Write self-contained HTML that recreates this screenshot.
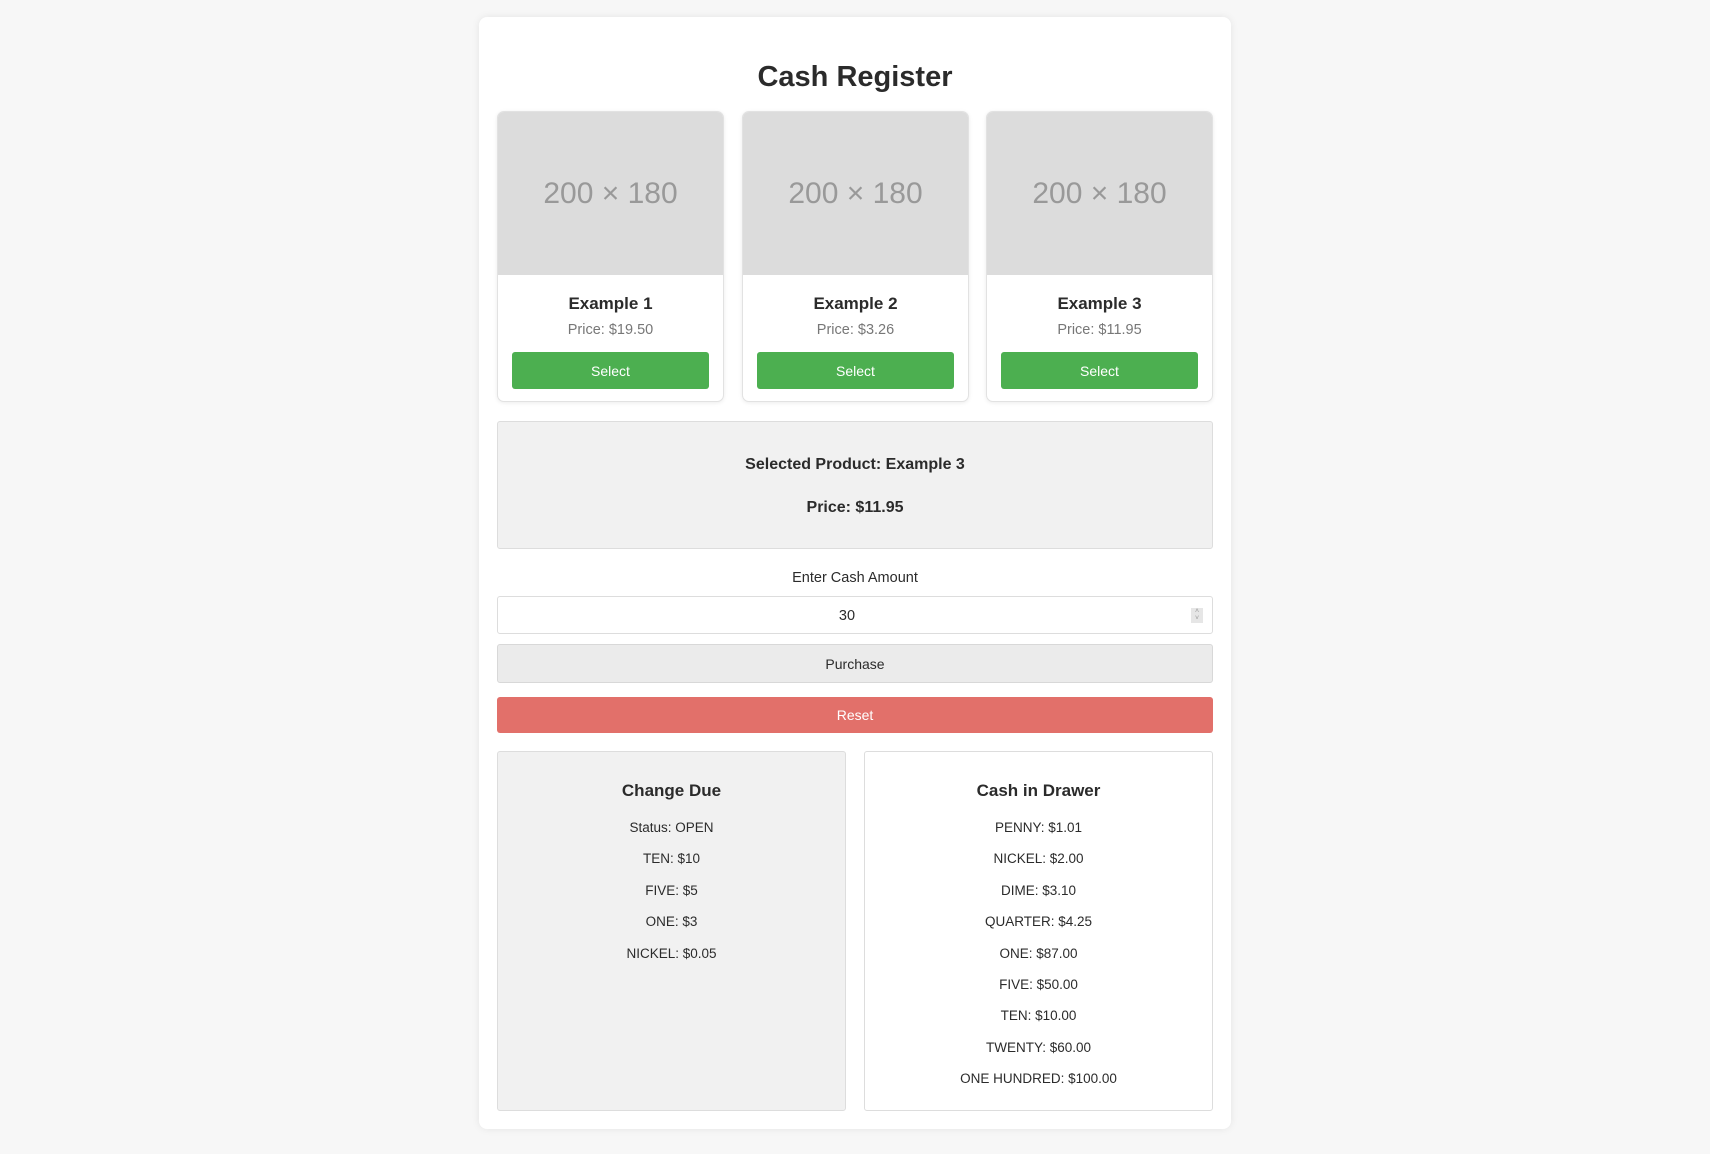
<!DOCTYPE html>
<html><head><meta charset="utf-8">
<style>
*{box-sizing:border-box;margin:0;padding:0}
html,body{width:1710px;height:1154px;background:#f7f7f7;font-family:"Liberation Sans",sans-serif;color:#2b2b2b;overflow:hidden;position:relative}
.abs{position:absolute}
.c{text-align:center}
.wrap{left:479px;top:17px;width:752px;height:1112px;background:#fff;border-radius:8px;box-shadow:0 0 8px rgba(0,0,0,0.08)}
.card{top:111px;width:227px;height:291px;background:#fff;border:1px solid #e2e2e2;border-radius:7px;box-shadow:0 1px 4px rgba(0,0,0,0.08);overflow:hidden}
.img{left:0;top:0;width:100%;height:163px;background:#dcdcdc;color:#999;font-size:30px;line-height:163px;text-align:center}
.ct{left:0;width:100%;text-align:center;font-weight:bold;font-size:17px;top:182px}
.cp{left:0;width:100%;text-align:center;color:#777;font-size:14.5px;top:210px}
.btn{left:14px;right:14px;top:240px;height:37px;background:#4caf50;color:#fff;border-radius:3px;font-size:14px;line-height:38px;text-align:center}
.line{width:100%;left:0;text-align:center;font-size:13.5px}
</style></head><body>
<div class="abs wrap"></div>
<div class="abs c" style="left:479px;width:752px;top:57px;font-size:29px;font-weight:bold;line-height:40px">Cash Register</div>

<div class="abs card" style="left:497px"><div class="abs img">200 × 180</div><div class="abs ct">Example 1</div><div class="abs cp">Price: $19.50</div><div class="abs btn">Select</div></div>
<div class="abs card" style="left:742px"><div class="abs img">200 × 180</div><div class="abs ct">Example 2</div><div class="abs cp">Price: $3.26</div><div class="abs btn">Select</div></div>
<div class="abs card" style="left:986px"><div class="abs img">200 × 180</div><div class="abs ct">Example 3</div><div class="abs cp">Price: $11.95</div><div class="abs btn">Select</div></div>

<div class="abs" style="left:497px;top:421px;width:716px;height:128px;background:#f1f1f1;border:1px solid #ddd;border-radius:3px">
  <div class="abs line" style="top:34px;font-weight:bold;font-size:16px">Selected Product: Example 3</div>
  <div class="abs line" style="top:77px;font-weight:bold;font-size:16px">Price: $11.95</div>
</div>

<div class="abs c" style="left:497px;width:716px;top:570px;font-size:14.5px">Enter Cash Amount</div>
<div class="abs" style="left:497px;top:596px;width:716px;height:38px;background:#fff;border:1px solid #ddd;border-radius:3px">
  <div class="abs" style="left:0;right:0;top:1px;line-height:36px;text-align:center;font-size:14.5px;padding-right:16px">30</div>
  <div class="abs" style="right:9px;top:11px;width:12px;height:15px;background:#e6e6e6;color:#999;font-size:7px;line-height:7px;text-align:center">˄<br>˅</div>
</div>
<div class="abs" style="left:497px;top:644px;width:716px;height:39px;background:#ebebeb;border:1px solid #d8d8d8;border-radius:3px;text-align:center;line-height:38px;font-size:14px">Purchase</div>
<div class="abs" style="left:497px;top:697px;width:716px;height:36px;background:#e2706a;color:#fff;border-radius:3px;text-align:center;line-height:36px;font-size:14px">Reset</div>

<div class="abs" style="left:497px;top:751px;width:349px;height:360px;background:#f1f1f1;border:1px solid #ddd;border-radius:3px">
  <div class="abs line" style="top:29px;font-weight:bold;font-size:17px">Change Due</div>
  <div class="abs line" style="top:68px">Status: OPEN</div>
  <div class="abs line" style="top:99px">TEN: $10</div>
  <div class="abs line" style="top:131px">FIVE: $5</div>
  <div class="abs line" style="top:162px">ONE: $3</div>
  <div class="abs line" style="top:194px">NICKEL: $0.05</div>
</div>
<div class="abs" style="left:864px;top:751px;width:349px;height:360px;background:#fff;border:1px solid #ddd;border-radius:3px">
  <div class="abs line" style="top:29px;font-weight:bold;font-size:17px">Cash in Drawer</div>
  <div class="abs line" style="top:68px">PENNY: $1.01</div>
  <div class="abs line" style="top:99px">NICKEL: $2.00</div>
  <div class="abs line" style="top:131px">DIME: $3.10</div>
  <div class="abs line" style="top:162px">QUARTER: $4.25</div>
  <div class="abs line" style="top:194px">ONE: $87.00</div>
  <div class="abs line" style="top:225px">FIVE: $50.00</div>
  <div class="abs line" style="top:256px">TEN: $10.00</div>
  <div class="abs line" style="top:288px">TWENTY: $60.00</div>
  <div class="abs line" style="top:319px">ONE HUNDRED: $100.00</div>
</div>
</body></html>
